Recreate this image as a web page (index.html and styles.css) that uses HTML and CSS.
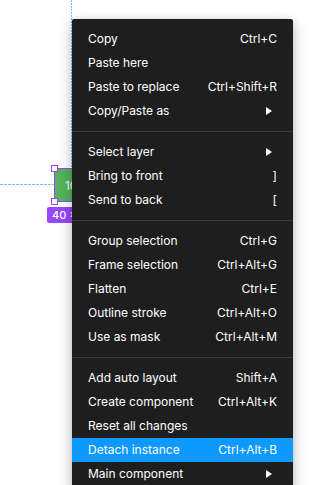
FILE: index.html
```html
<!DOCTYPE html>
<html lang="en">
<head>
    <meta charset="UTF-8">
    <meta name="viewport" content="width=device-width, initial-scale=1.0">
    <title>Canvas context menu</title>
    <link rel="stylesheet" href="styles.css">
</head>
<body>
    <div class="canvas">
        <!-- measurement guides -->
        <div class="guide guide-v"></div>
        <div class="guide guide-h"></div>

        <!-- selected instance -->
        <div class="node">
            <span class="node-label">100</span>
            <span class="handle handle-tl"></span>
            <span class="handle handle-tr"></span>
            <span class="handle handle-bl"></span>
            <span class="handle handle-br"></span>
        </div>
        <div class="size-badge">40 × 32</div>

        <!-- context menu -->
        <ul class="context-menu">
            <li class="menu-item"><span>Copy</span><span class="shortcut">Ctrl+C</span></li>
            <li class="menu-item"><span>Paste here</span></li>
            <li class="menu-item"><span>Paste to replace</span><span class="shortcut">Ctrl+Shift+R</span></li>
            <li class="menu-item"><span>Copy/Paste as</span><span class="submenu-arrow"></span></li>
            <li class="separator"></li>
            <li class="menu-item"><span>Select layer</span><span class="submenu-arrow"></span></li>
            <li class="menu-item"><span>Bring to front</span><span class="shortcut">]</span></li>
            <li class="menu-item"><span>Send to back</span><span class="shortcut">[</span></li>
            <li class="separator"></li>
            <li class="menu-item"><span>Group selection</span><span class="shortcut">Ctrl+G</span></li>
            <li class="menu-item"><span>Frame selection</span><span class="shortcut">Ctrl+Alt+G</span></li>
            <li class="menu-item"><span>Flatten</span><span class="shortcut">Ctrl+E</span></li>
            <li class="menu-item"><span>Outline stroke</span><span class="shortcut">Ctrl+Alt+O</span></li>
            <li class="menu-item"><span>Use as mask</span><span class="shortcut">Ctrl+Alt+M</span></li>
            <li class="separator"></li>
            <li class="menu-item"><span>Add auto layout</span><span class="shortcut">Shift+A</span></li>
            <li class="menu-item"><span>Create component</span><span class="shortcut">Ctrl+Alt+K</span></li>
            <li class="menu-item"><span>Reset all changes</span></li>
            <li class="menu-item active"><span>Detach instance</span><span class="shortcut">Ctrl+Alt+B</span></li>
            <li class="menu-item"><span>Main component</span><span class="submenu-arrow"></span></li>
        </ul>
    </div>
</body>
</html>
```

FILE: styles.css
```css
:root {
    --menu-bg: #1e1e1e;
    --menu-text: #ffffff;
    --menu-divider: #383838;
    --highlight: #0d99ff;
    --component: #9747ff;
    --guide: #78bdfb;
    --node-fill: #55b45c;
}

* {
    margin: 0;
    padding: 0;
    box-sizing: border-box;
}

body {
    background: #ffffff;
    font-family: 'Inter', 'Noto Sans', sans-serif;
    overflow: hidden;
}

.canvas {
    position: relative;
    width: 331px;
    height: 485px;
}

/* Guides */
.guide {
    position: absolute;
}

.guide-v {
    left: 71px;
    top: 0;
    width: 1px;
    height: 168px;
    background: repeating-linear-gradient(to bottom, var(--guide) 0 2px, transparent 2px 3px);
}

.guide-h {
    left: 0;
    top: 184px;
    width: 54px;
    height: 1px;
    background: repeating-linear-gradient(to right, var(--guide) 0 3px, transparent 3px 4px);
}

/* Selected node */
.node {
    position: absolute;
    left: 55px;
    top: 169px;
    width: 40px;
    height: 32px;
    background: var(--node-fill);
    outline: 1px solid var(--component);
    display: flex;
    align-items: center;
    justify-content: center;
}

.node-label {
    color: #ffffff;
    font-size: 12px;
}

.handle {
    position: absolute;
    width: 7px;
    height: 7px;
    background: #ffffff;
    border: 1px solid var(--component);
}

.handle-tl { left: -4px; top: -4px; }
.handle-tr { right: -4px; top: -4px; }
.handle-bl { left: -4px; bottom: -4px; }
.handle-br { right: -4px; bottom: -4px; }

.size-badge {
    position: absolute;
    left: 47px;
    top: 207px;
    height: 16px;
    padding: 0 5px;
    background: var(--component);
    color: #ffffff;
    font-size: 11px;
    font-weight: 500;
    line-height: 16px;
    border-radius: 2px;
}

/* Context menu */
.context-menu {
    position: absolute;
    left: 72px;
    top: 19px;
    width: 221px;
    padding: 8px 0;
    list-style: none;
    background: var(--menu-bg);
    border-radius: 2px;
    box-shadow: 0 2px 7px rgba(0, 0, 0, 0.15), 0 5px 17px rgba(0, 0, 0, 0.2);
    color: var(--menu-text);
    font-size: 12px;
    line-height: 16px;
}

.menu-item {
    display: flex;
    justify-content: space-between;
    align-items: center;
    height: 24px;
    padding: 0 16px 1px;
}

.menu-item.active {
    background: var(--highlight);
}

.separator {
    height: 1px;
    margin: 8px 0;
    background: var(--menu-divider);
}

.submenu-arrow {
    width: 0;
    height: 0;
    margin-right: 5px;
    border-top: 4px solid transparent;
    border-bottom: 4px solid transparent;
    border-left: 6px solid var(--menu-text);
}
```
